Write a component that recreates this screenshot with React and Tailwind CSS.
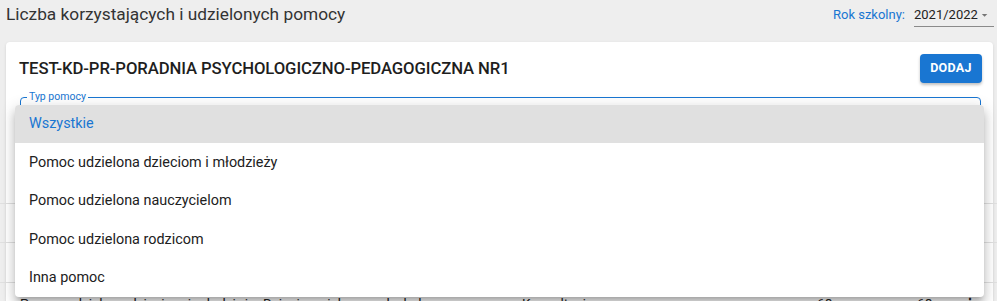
import React from "react"

const menuItems = [
  "Wszystkie",
  "Pomoc udzielona dzieciom i młodzieży",
  "Pomoc udzielona nauczycielom",
  "Pomoc udzielona rodzicom",
  "Inna pomoc",
]

export default function App() {
  return (
    <div className="relative h-[301px] overflow-hidden bg-[#eeeeee] font-['Roboto',sans-serif] text-[#212121]">
      {/* top bar */}
      <div className="flex h-[30px] items-center justify-between pl-[6px] pr-[3px]">
        <h1 className="text-[17.3px] font-normal text-[#333]">Liczba korzystających i udzielonych pomocy</h1>
        <div className="flex items-center gap-[9px] text-[13px]">
          <span className="text-[#1976d2]">Rok szkolny:</span>
          <div className="flex h-[24px] w-[80px] items-center justify-between border-b border-[#8a8a8a] pt-[1px] pr-[3px]">
            <span className="text-[#222]">2021/2022</span>
            <svg viewBox="0 0 24 24" className="h-[18px] w-[18px] fill-[#757575]">
              <path d="M7 10l5 5 5-5z" />
            </svg>
          </div>
        </div>
      </div>

      {/* card */}
      <div className="mx-[6px] mt-[12px] mr-[4px] rounded-[4px] bg-white shadow-[0_1px_3px_rgba(0,0,0,0.12)]">
        <div className="flex items-center justify-between pl-[13px] pr-[11px] pt-[12px]">
          <h2 className="text-[16.7px] font-medium tracking-[-0.1px] text-[#1e1e1e]">
            TEST-KD-PR-PORADNIA PSYCHOLOGICZNO-PEDAGOGICZNA NR1
          </h2>
          <button className="h-[29px] w-[62px] rounded-[4px] bg-[#1976d2] text-[12.5px] font-bold tracking-[0.3px] text-white shadow-[0_2px_3px_rgba(0,0,0,0.25)]">
            DODAJ
          </button>
        </div>

        <div className="relative mt-[14px] ml-[14px] mr-[12px] h-[40px] rounded-[4px] border border-[#1976d2]">
          <span className="absolute -top-[7px] left-[6px] bg-white px-[2px] text-[10.5px] leading-[12px] text-[#1976d2]">
            Typ pomocy
          </span>
        </div>

        <div className="h-[27px]" />
        <div className="h-[39px]" />

        <div className="-ml-[6px] -mr-[4px]">
          <div className="h-[39px] border-t border-[#e0e0e0]" />
          <div className="h-[40px] border-t border-[#e0e0e0]" />
          <div className="flex h-[40px] items-center whitespace-nowrap border-t border-[#e0e0e0] pt-[1px] text-[13.7px] text-[#212121]">
            <span className="w-[263px] shrink-0 pl-[20px] text-[13.7px]">Pomoc udzielona dzieciom i młodzieży</span>
            <span className="w-[259px] shrink-0 text-[13.7px]">Dzieci w wieku przedszkolnym</span>
            <span className="w-[295px] shrink-0 text-[13.7px]">Konsultacje</span>
            <span className="w-[100px] shrink-0 text-[13.7px]">68</span>
            <span className="w-[46px] shrink-0 text-[13.7px]">68</span>
            <span className="text-[13.7px] font-bold">⋮</span>
          </div>
        </div>
      </div>

      {/* open select menu */}
      <ul className="absolute left-[15px] top-[105px] w-[969px] overflow-hidden rounded-[4px] bg-white shadow-[0px_5px_5px_-3px_rgba(0,0,0,0.2),0px_8px_10px_1px_rgba(0,0,0,0.14),0px_3px_14px_2px_rgba(0,0,0,0.12)]">
        {menuItems.map((item, i) => (
          <li
            key={item}
            className={
              i === 0
                ? "flex h-[38.4px] items-center bg-[#e0e0e0] px-[14px] text-[14.4px] text-[#1976d2]"
                : "flex h-[38.4px] items-center px-[14px] text-[14.4px] text-[#212121]"
            }
          >
            {item}
          </li>
        ))}
      </ul>
    </div>
  )
}
